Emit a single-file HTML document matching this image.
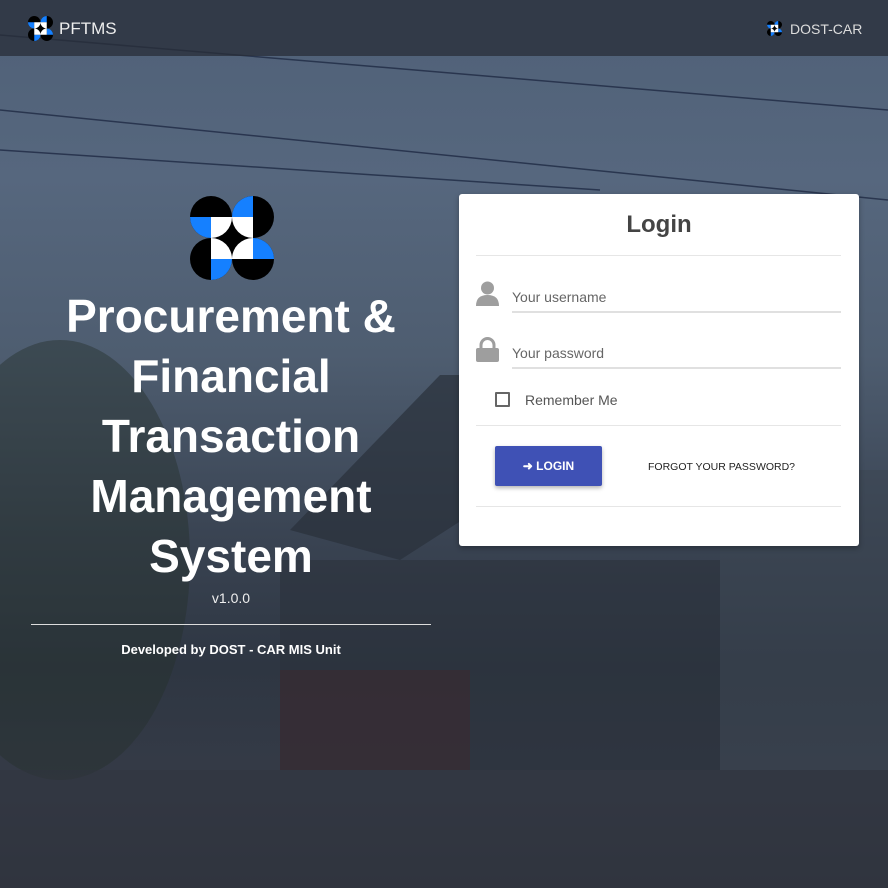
<!DOCTYPE html>
<html><head><meta charset="utf-8"><style>
*{margin:0;padding:0;box-sizing:border-box}
body{width:888px;height:888px;overflow:hidden;position:relative;font-family:"Liberation Sans",sans-serif;
background:linear-gradient(180deg,#4f6077 0%,#56677e 20%,#4e5d70 40%,#3a4453 60%,#2e3642 75%,#353b47 88%,#30353f 100%)}
.bg{position:absolute}
.nav{position:absolute;left:0;top:0;width:888px;height:56px;background:rgba(40,46,56,.75)}
.card{position:absolute;left:459px;top:194px;width:400px;height:352px;background:#fff;border-radius:3px;box-shadow:0 2px 6px rgba(0,0,0,.3)}
.hr{position:absolute;left:17px;width:365px;height:1px;background:#e6e6e6}
.field{position:absolute;left:53px;width:329px;border-bottom:2px solid #e0e0e0;color:#666;font-size:14px}
</style></head><body>
<svg width="0" height="0" style="position:absolute"><defs>
<symbol id="lg" viewBox="0 0 84 84">
<rect x="21" y="21" width="42" height="42" fill="#000"/>
<circle cx="21" cy="21" r="21" fill="#000"/><path d="M0 21A21 21 0 0 0 21 42V21Z" fill="#1580ff"/><path d="M21 21V42A21 21 0 0 0 42 21Z" fill="#fff"/>
<circle cx="63" cy="21" r="21" fill="#000"/><path d="M63 0A21 21 0 0 0 42 21H63Z" fill="#1580ff"/><path d="M42 21A21 21 0 0 0 63 42V21Z" fill="#fff"/>
<circle cx="63" cy="63" r="21" fill="#000"/><path d="M84 63A21 21 0 0 0 63 42V63Z" fill="#1580ff"/><path d="M63 63V42A21 21 0 0 0 42 63Z" fill="#fff"/>
<circle cx="21" cy="63" r="21" fill="#000"/><path d="M21 84A21 21 0 0 0 42 63H21Z" fill="#1580ff"/><path d="M42 63A21 21 0 0 0 21 42V63Z" fill="#fff"/>
</symbol></defs></svg>
<svg class="bg" style="left:0;top:0" width="888" height="888">
<g stroke="#1f2a44" stroke-width="1.5" fill="none" opacity=".8">
<path d="M0 35 Q300 60 888 110"/><path d="M0 110 Q400 150 888 200"/><path d="M0 150 Q300 170 600 190"/></g>
<polygon points="290,530 440,375 520,375 540,470 400,560" fill="#2a303a" opacity=".7"/>
<rect x="280" y="560" width="440" height="210" fill="#2b323c" opacity=".6"/>
<rect x="720" y="470" width="168" height="300" fill="#3c4552" opacity=".5"/>
<rect x="280" y="670" width="190" height="100" fill="#3a2a30" opacity=".6"/>
<ellipse cx="60" cy="560" rx="130" ry="220" fill="#26302c" opacity=".45"/>
<rect x="0" y="770" width="888" height="118" fill="#2f343d" opacity=".5"/>
</svg>
<div class="nav"></div>
<svg style="position:absolute;left:28px;top:16px" width="25" height="25"><use href="#lg"/></svg>
<div style="position:absolute;left:59px;top:19px;color:#eee;font-size:17px">PFTMS</div>
<svg style="position:absolute;left:767px;top:21px" width="15" height="15"><use href="#lg"/></svg>
<div style="position:absolute;left:790px;top:21px;color:#ddd;font-size:14px">DOST-CAR</div>
<svg style="position:absolute;left:190px;top:196px" width="84" height="84"><use href="#lg"/></svg>
<div style="position:absolute;left:30px;top:286px;width:402px;text-align:center;color:#fff;font-weight:bold;font-size:46px;line-height:60px">Procurement &amp;<br>Financial<br>Transaction<br>Management<br>System</div>
<div style="position:absolute;left:30px;top:590px;width:402px;text-align:center;color:#eee;font-size:14px">v1.0.0</div>
<div style="position:absolute;left:31px;top:624px;width:400px;height:1px;background:#ddd"></div>
<div style="position:absolute;left:30px;top:642px;width:402px;text-align:center;color:#fff;font-weight:bold;font-size:13px">Developed by DOST - CAR MIS Unit</div>
<div class="card">
<div style="position:absolute;left:0;top:17px;width:400px;text-align:center;font-size:24px;font-weight:bold;color:#444">Login</div>
<div class="hr" style="top:61px"></div>
<svg style="position:absolute;left:17px;top:87px" width="23" height="26" viewBox="0 0 23 26"><circle cx="11.5" cy="7" r="6.5" fill="#9e9e9e"/><path d="M0 25Q0 14 11.5 14Q23 14 23 25Z" fill="#9e9e9e"/></svg>
<div class="field" style="top:95px;height:24px">Your username</div>
<svg style="position:absolute;left:17px;top:143px" width="23" height="26" viewBox="0 0 23 26"><path d="M5 12V8a6.5 6.5 0 0 1 13 0v4" stroke="#9e9e9e" stroke-width="3" fill="none"/><rect x="0" y="11" width="23" height="14" rx="2" fill="#9e9e9e"/></svg>
<div class="field" style="top:151px;height:24px">Your password</div>
<div style="position:absolute;left:36px;top:198px;width:15px;height:15px;border:2px solid #666;border-radius:1px"></div>
<div style="position:absolute;left:66px;top:198px;font-size:14px;color:#555">Remember Me</div>
<div class="hr" style="top:231px"></div>
<div style="position:absolute;left:36px;top:252px;width:107px;height:40px;background:#3f51b5;border-radius:2px;box-shadow:0 2px 4px rgba(0,0,0,.3);color:#fff;font-size:12px;font-weight:bold;text-align:center;line-height:40px">&#10140; LOGIN</div>
<div style="position:absolute;left:189px;top:267px;font-size:10.5px;color:#222">FORGOT YOUR PASSWORD?</div>
<div class="hr" style="top:312px"></div>
</div>
</body></html>
